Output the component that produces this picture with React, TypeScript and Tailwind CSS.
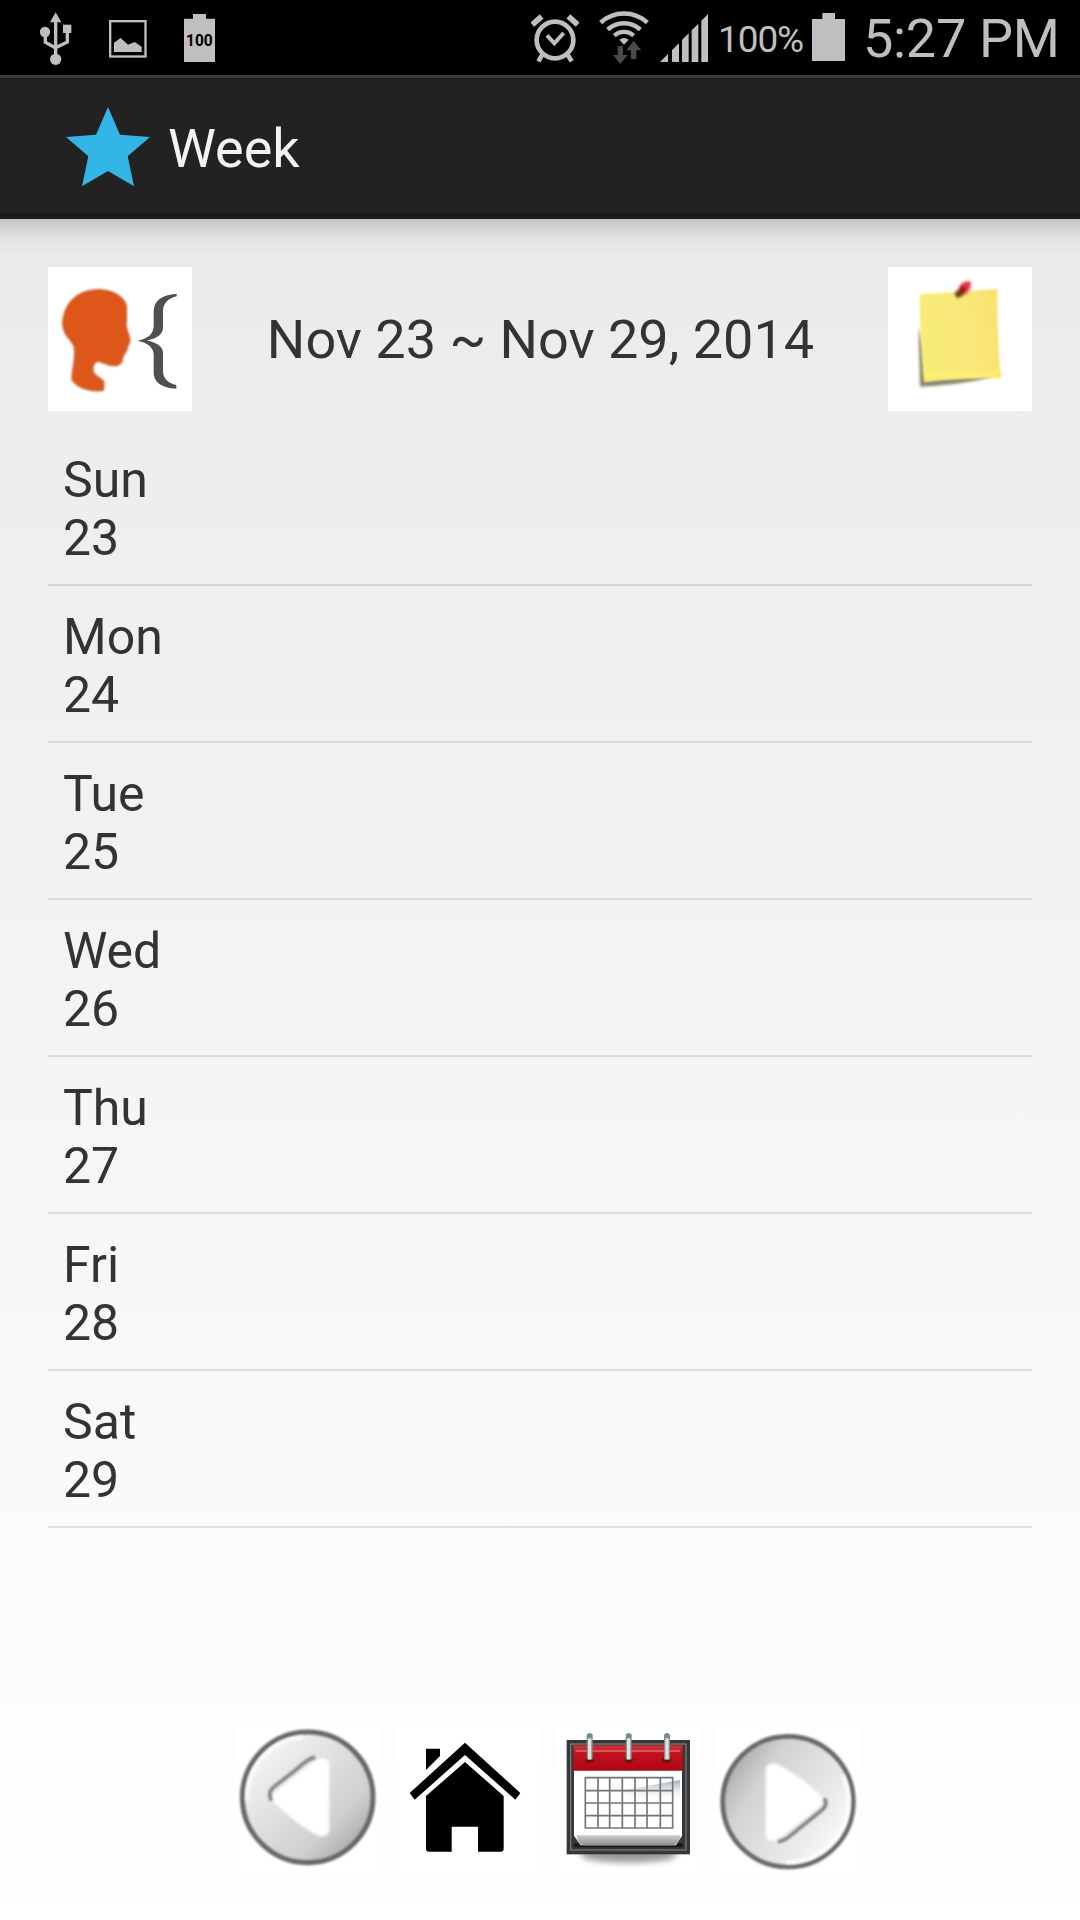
import type { ReactNode } from "react";

const days = [
    { name: "Sun", date: 23 },
    { name: "Mon", date: 24 },
    { name: "Tue", date: 25 },
    { name: "Wed", date: 26 },
    { name: "Thu", date: 27 },
    { name: "Fri", date: 28 },
    { name: "Sat", date: 29 },
];

function StatusBar() {
    return (
        <div className="flex h-[75px] shrink-0 bg-black text-[#bfbfbf]">
            {/* Notifications */}
            <svg className="ml-[39px] h-[75px] w-[33px]" viewBox="117 0 99 225" fill="currentColor">
                <path d="M167 37l17 30h-34z" />
                <circle cx="135" cy="96" r="15.5" />
                <rect x="189" y="74" width="25" height="25" />
                <circle cx="167" cy="178" r="17" />
                <path d="M167 60v110M136 100v27l31 17M202 96v30l-35 17" fill="none" stroke="currentColor" strokeWidth="10" />
            </svg>
            <svg className="ml-[37px] h-[75px] w-[38px]" viewBox="327 0 114 225" fill="currentColor">
                <rect x="330.5" y="63.500" width="106" height="106" fill="none" stroke="currentColor" strokeWidth="7" />
                <path d="M342 156v-28l20-14 22 20 20-8 21 14v16z" />
            </svg>
            <svg className="ml-[37px] h-[75px] w-[31px]" viewBox="552 0 93 225" fill="currentColor">
                <path d="M579 42h39v14h27v130h-93V56h27z" />
                <text x="598" y="138" fill="#000" fontFamily="Roboto, sans-serif" fontSize="51" fontWeight="700" textAnchor="middle" textLength="80" lengthAdjust="spacingAndGlyphs">
                    100
                </text>
            </svg>

            {/* System icons */}
            <svg className="ml-[316px] h-[75px] w-[48px]" viewBox="93 0 144 225" fill="none" stroke="currentColor">
                <circle cx="165" cy="120" r="55" strokeWidth="14" />
                <path d="M97 74l28-25M233 74l-28-25" strokeWidth="17" />
                <path d="M127 164l-12 20M203 164l12 20" strokeWidth="14" />
                <path d="M141 106l22 24 28-31" strokeWidth="12" />
            </svg>
            <svg className="ml-[20px] h-[75px] w-[50px]" viewBox="297 0 150 225" fill="none" stroke="currentColor">
                <path d="M302 68a103 103 0 0 1 140 0M323 89a72 72 0 0 1 98 0M343 107a42 42 0 0 1 58 0" strokeWidth="13" />
                <path d="M358 119q14-10 28 0l-14 15z" fill="currentColor" stroke="none" />
                <path d="M353 138h16v27h14l-22 27-22-27h14zM393 177h16v-26h15l-23-29-22 29h14z" fill="#4a4a4a" stroke="none" />
            </svg>
            <svg className="ml-[11px] h-[75px] w-[48px]" viewBox="480 0 144 225" fill="currentColor">
                <path d="M480 186l24-24v24zM516 150l21-20v56h-21zM546 120l20-20v86h-20zM575 91l20-20v115h-20zM604 62l20-20v144h-20z" />
            </svg>
            <span className="ml-[10px] w-[84px] pt-[18px] text-[37px] leading-[43px] tracking-[-1.1px] whitespace-nowrap">100%</span>
            <svg className="ml-[10px] h-[75px] w-[33px]" viewBox="96 0 99 225" fill="currentColor">
                <path d="M127 39h38v18h30v126H96V57h31z" />
            </svg>
            <span className="ml-[18px] pt-[7px] text-[54px] leading-[63px] tracking-[-0.3px] whitespace-nowrap">5:27 PM</span>
        </div>
    );
}

function ActionBar() {
    return (
        <header className="flex h-[144px] shrink-0 items-center border-t-[3px] border-b-[6px] border-t-[#3a3a3a] border-b-[#1b1b1b] bg-[#222]">
            <svg className="mt-[2px] ml-[66px] h-[80px] w-[84px]" viewBox="198 321 252 240">
                <path d="M324 321l36 83 90 7-67 58 19 90-78-46-78 46 19-90-67-58 90-7z" fill="#33b5e5" />
            </svg>
            <h1 className="mt-[6px] ml-[18px] text-[54px] leading-[63px] text-[#f3f3f3]">Week</h1>
        </header>
    );
}

function SpeakButton() {
    return (
        <button className="h-[144px] w-[144px] bg-white" aria-label="Speak">
            <svg className="h-full w-full" viewBox="54 50 432 432">
                <path
                    className="blur-[3px]"
                    d="M205 118C250 118 286 140 290 170L289 215C286 235 298 250 300 270C299 282 292 285 292 297C284 311 276 320 276 335C266 350 250 347 236 344L206 333C191 336 187 350 190 364C195 379 224 385 222 398L221 420C190 426 142 416 126 389C124 363 138 328 132 288C122 266 98 255 98 216C102 160 140 118 205 118Z"
                    fill="#dd571b"
                    stroke="#c85320"
                    strokeWidth="3"
                />
                <path
                    className="blur-[2px]"
                    d="M440 130Q372 135 371 182V228Q369 263 323 271Q369 281 371 312V368Q372 411 439 415V404Q400 395 399 362V306Q397 281 351 270Q398 261 399 232V182Q400 148 440 138Z"
                    fill="#505050"
                />
            </svg>
        </button>
    );
}

function NoteButton() {
    return (
        <button className="h-[144px] w-[144px] bg-white" aria-label="Notes">
            <svg className="h-full w-full" viewBox="54 50 432 432">
                <defs>
                    <linearGradient id="note" x1="0" x2="1" y1="0.2" y2="0">
                        <stop offset="0" stopColor="#f8ec79" />
                        <stop offset="0.5" stopColor="#fae97a" />
                        <stop offset="1" stopColor="#fbdf6b" />
                    </linearGradient>
                </defs>
                <path className="blur-[4px]" d="M146 230L150 409Q250 405 330 388L370 378L180 370Z" fill="#85866d" />
                <path className="blur-[3px]" d="M149 132L382 116Q382 310 395 384Q280 382 162 396Q150 290 149 132Z" fill="url(#note)" />
                <path className="blur-[4px]" d="M165 370Q270 382 385 366" fill="none" stroke="#fff36d" strokeWidth="8" />
                <g className="blur-[4px]">
                    <path d="M257 124L276 109L290 127L266 143Q250 139 257 124Z" fill="#6b3c1c" />
                    <path d="M270 105Q283 90 301 93Q306 112 290 129Q274 126 266 116Z" fill="#df3345" />
                    <path d="M270 121l14-8" stroke="#a70a12" strokeWidth="14" />
                </g>
            </svg>
        </button>
    );
}

function NavButton({ label, viewBox, children }: { label: string; viewBox: string; children: ReactNode }) {
    return (
        <button className="h-[144px] w-[144px] bg-white" aria-label={label}>
            <svg className="h-full w-full" viewBox={viewBox}>
                {children}
            </svg>
        </button>
    );
}

function BottomNav() {
    return (
        <nav className="mt-auto mb-[48px] flex justify-center gap-[16px] pl-[14px]">
            <NavButton label="Previous week" viewBox="45 54 432 432">
                <defs>
                    <linearGradient id="prev" x1="0" y1="0" x2="1" y2="1">
                        <stop offset="0" stopColor="#fff" />
                        <stop offset="0.3" stopColor="#e9e9e9" />
                        <stop offset="0.7" stopColor="#cfcfcf" />
                        <stop offset="1" stopColor="#929292" />
                    </linearGradient>
                </defs>
                <circle className="blur-[3px]" cx="263" cy="262" r="196" fill="url(#prev)" stroke="#686868" strokeWidth="15" />
                <path className="blur-[4px]" d="M82 272A181 181 0 0 1 250 82" fill="none" stroke="#fff" strokeWidth="9" />
                <path className="blur-[4px]" d="M288 150Q326 134 328 164V358Q324 387 290 376Q220 335 160 275Q150 262 166 245Z" fill="#fff" />
                <path className="blur-[3px]" d="M286 142Q264 145 233 175L160 232Q142 248 154 272" fill="none" stroke="#858585" strokeWidth="11" />
            </NavButton>
            <NavButton label="Home" viewBox="525 54 432 432">
                <g className="blur-[1px]">
                    <path d="M618 116h42v22l-42 42z" />
                    <path d="M569 249L735 98l166 151-15 20-151-134-151 134z" />
                    <path d="M618 258L735 156l116 102v158q0 9-9 9h-68v-75h-79v75h-68q-9 0-9-9z" />
                </g>
            </NavButton>
            <NavButton label="Calendar" viewBox="45 54 432 432">
                <defs>
                    <linearGradient id="red" x1="0" y1="0" x2="0" y2="1">
                        <stop offset="0" stopColor="#c9343d" />
                        <stop offset="0.35" stopColor="#c2101c" />
                        <stop offset="1" stopColor="#b00712" />
                    </linearGradient>
                    <linearGradient id="fold" x1="0" y1="0" x2="0" y2="1">
                        <stop offset="0" stopColor="#ccc" />
                        <stop offset="1" stopColor="#8f8f8f" />
                    </linearGradient>
                    <linearGradient id="shine" x1="0" y1="0" x2="0" y2="1">
                        <stop offset="0" stopColor="#9dafbf" />
                        <stop offset="1" stopColor="#fff" stopOpacity="0" />
                    </linearGradient>
                </defs>
                <ellipse className="blur-[9px]" cx="266" cy="434" rx="145" ry="24" fill="#999" />
                <g className="blur-[2px]">
                    <rect x="80" y="90" width="370" height="343" fill="#363838" />
                    <rect x="92" y="102" width="346" height="318" fill="none" stroke="#777" strokeWidth="4" />
                    <path d="M103 400h325v12H103z" fill="#191919" />
                    <path d="M102 181h324v196l-18 29H122l-20-29z" fill="#fff" />
                    <path d="M109 376h313q-7 30-25 30H134q-20 0-25-30z" fill="url(#fold)" />
                    <rect x="100" y="106" width="328" height="76" fill="url(#red)" />
                    <path d="M107 123h313" stroke="#df6870" strokeWidth="4" />
                    <path d="M240 243L420 210V270Q320 285 240 243Z" fill="url(#shine)" />
                    <path
                        d="M136 203H398V354H136ZM136 242H398M136 279H398M136 317H398M174 203V354M209 203V354M247 203V354M285 203V354M321 203V354M361 203V354"
                        fill="none"
                        stroke="#757575"
                        strokeWidth="5"
                    />
                </g>
                {[149, 266, 381].map((x) => (
                    <g key={x} className="blur-[2px]">
                        <ellipse cx={x} cy="150" rx="13" ry="8" fill="#5e1515" />
                        <path d={`M${x} 74v75`} stroke="#81898a" strokeWidth="18" />
                        <path d={`M${x} 83v65`} stroke="#dfe2dc" strokeWidth="10" />
                        <circle cx={x} cy="77" r="8" fill="#718c99" />
                    </g>
                ))}
            </NavButton>
            <NavButton label="Next week" viewBox="524 54 432 432">
                <defs>
                    <linearGradient id="next" x1="0" y1="0.1" x2="1" y2="0.8">
                        <stop offset="0" stopColor="#9b9b9b" />
                        <stop offset="0.3" stopColor="#d2d2d2" />
                        <stop offset="0.75" stopColor="#ececec" />
                        <stop offset="1" stopColor="#fff" />
                    </linearGradient>
                </defs>
                <circle className="blur-[3px]" cx="743" cy="275" r="196" fill="url(#next)" stroke="#686868" strokeWidth="14" />
                <path className="blur-[4px]" d="M907 195A183 183 0 0 1 738 457" fill="none" stroke="#fff" strokeWidth="9" />
                <path className="blur-[4px]" d="M676 178Q680 154 713 163Q790 205 845 260Q852 275 837 290L712 389Q681 399 676 375Z" fill="#fff" />
                <path className="blur-[3px]" d="M852 265Q864 284 845 300L740 385Q728 394 713 395" fill="none" stroke="#858585" strokeWidth="11" />
            </NavButton>
        </nav>
    );
}

export default function App() {
    return (
        <div className="flex h-[1920px] w-[1080px] flex-col overflow-hidden bg-linear-to-b from-[#e8e8e8] to-white font-['Roboto',sans-serif] text-[#333]">
            <StatusBar />
            <ActionBar />
            <div className="h-[36px] shrink-0 bg-linear-to-b from-black/16 via-black/4 to-transparent" />

            <main className="flex flex-1 flex-col px-[48px] pt-[12px]">
                <div className="flex items-center justify-between">
                    <SpeakButton />
                    <h2 className="pl-px text-[54px] leading-[63px] whitespace-nowrap">Nov 23 ~ Nov 29, 2014</h2>
                    <NoteButton />
                </div>

                <ul className="mt-[18px]">
                    {days.map((day) => (
                        <li key={day.name} className="h-[157px] border-b-2 border-black/10 px-[15px] pt-[22px] text-[50px] leading-[58px]">
                            <div>{day.name}</div>
                            <div>{day.date}</div>
                        </li>
                    ))}
                </ul>

                <BottomNav />
            </main>
        </div>
    );
}
